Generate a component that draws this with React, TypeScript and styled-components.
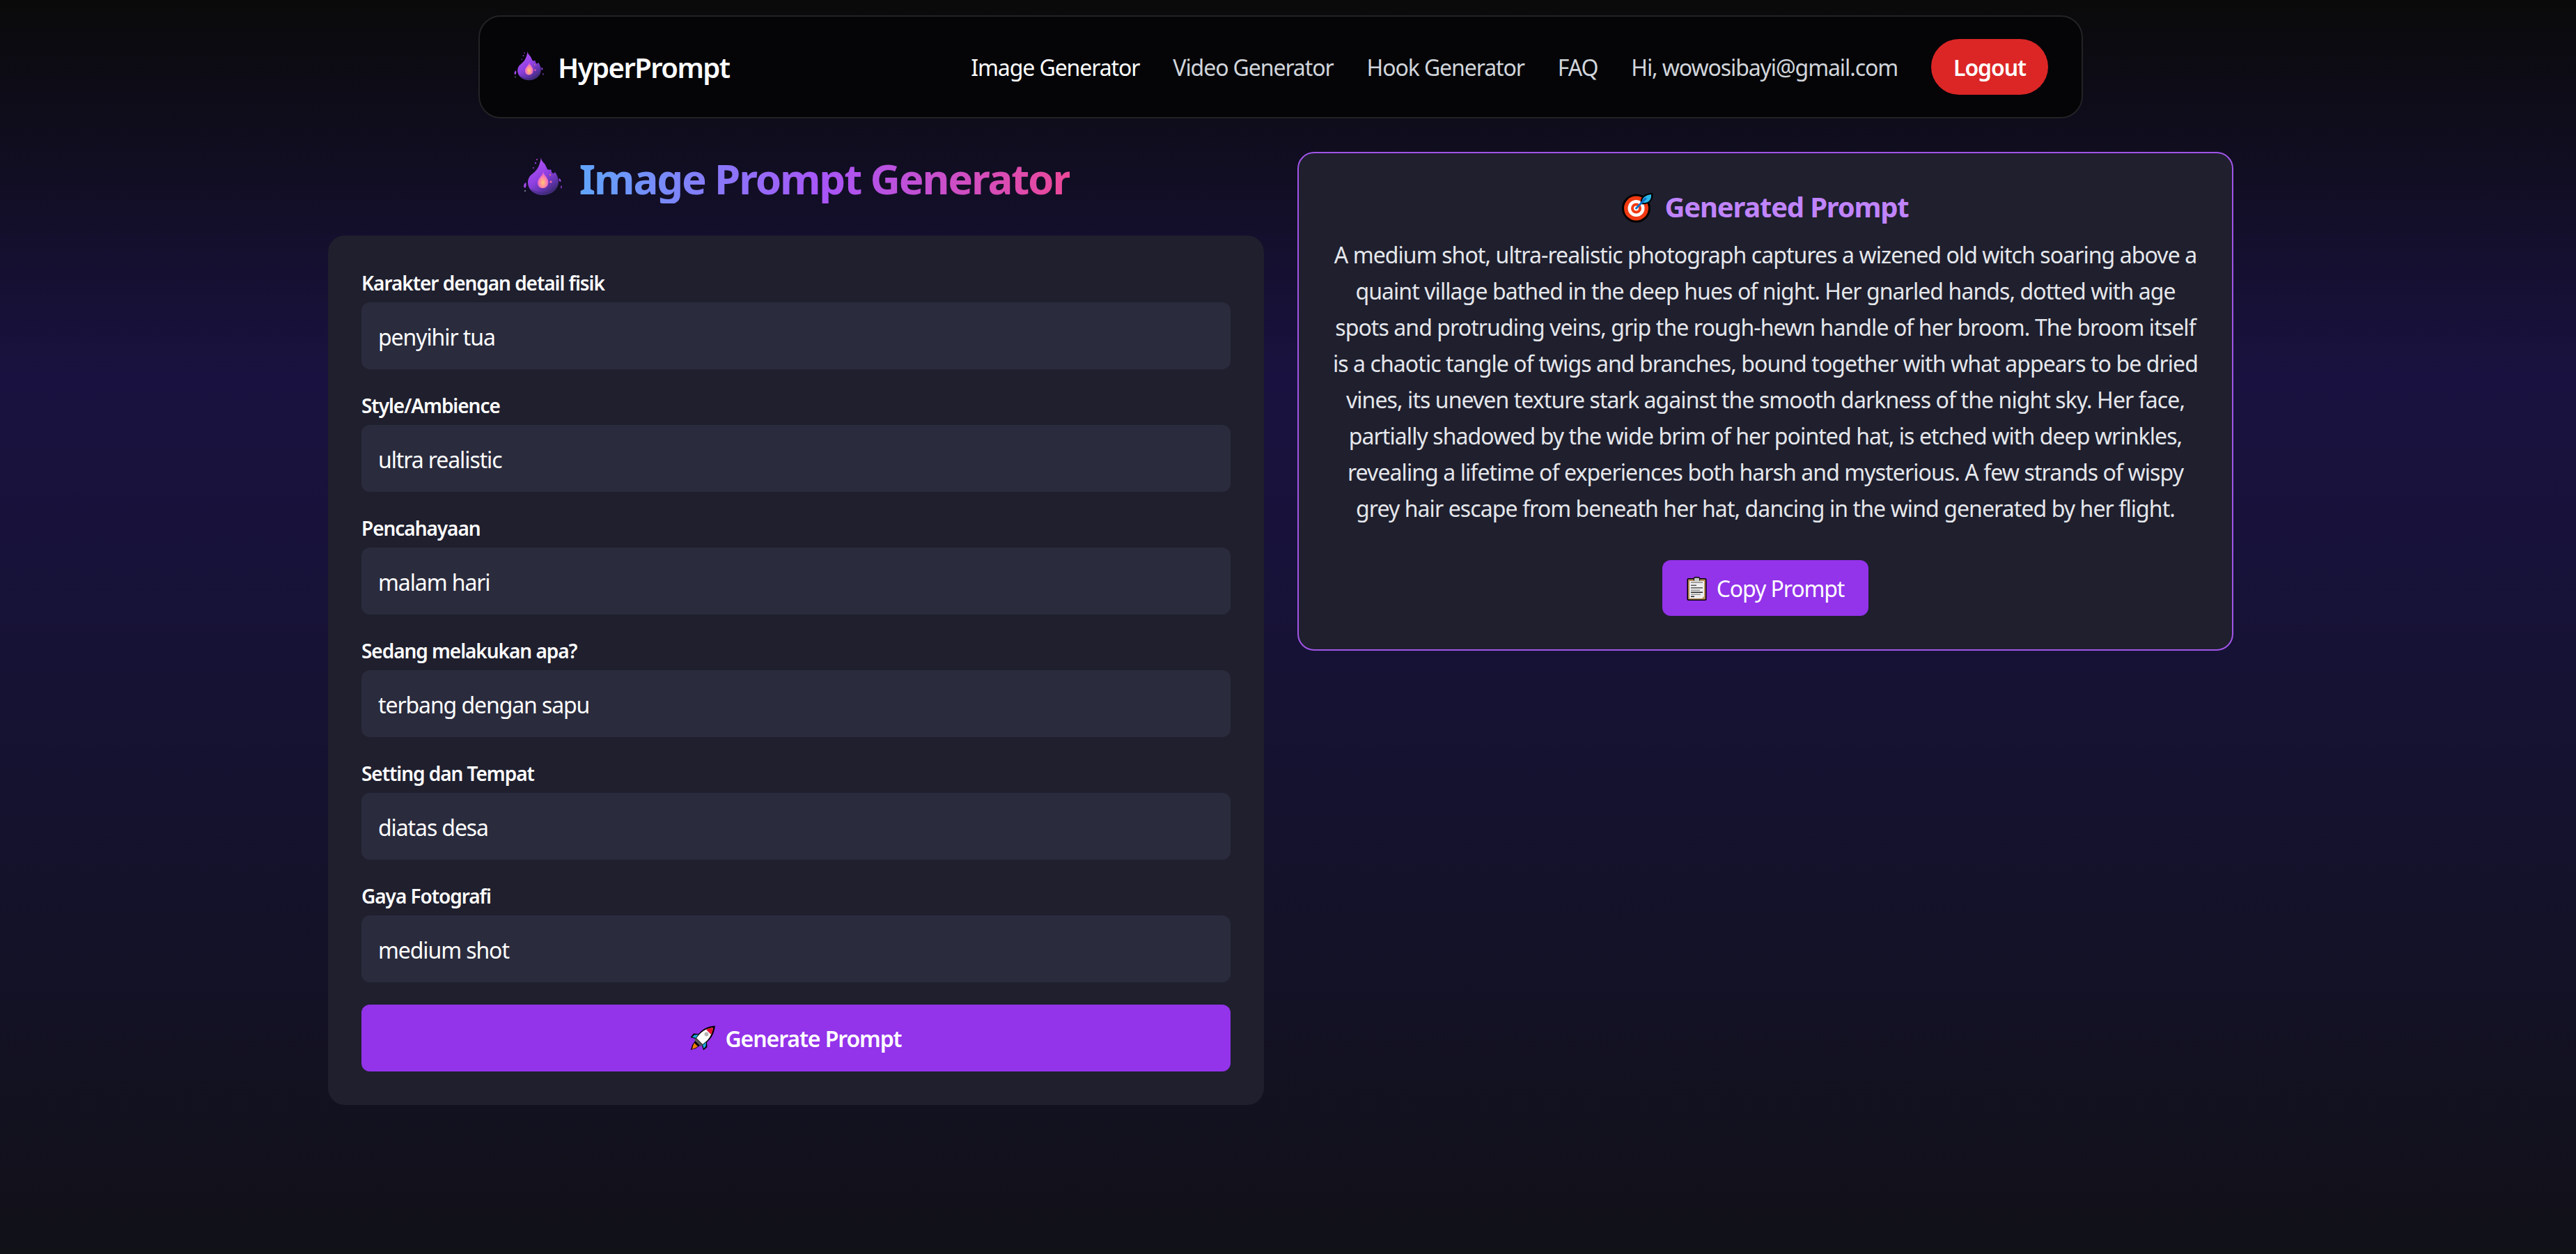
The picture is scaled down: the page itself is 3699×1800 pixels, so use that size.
import React from 'react';
import styled, { createGlobalStyle } from 'styled-components';

const GlobalStyle = createGlobalStyle`
  html, body {
    margin: 0;
    padding: 0;
  }
  body {
    font-family: "Noto Sans", "Open Sans", sans-serif;
    color: #fff;
    background: #111118;
  }
  * {
    box-sizing: border-box;
  }
`;

const Page = styled.div`
  min-height: 1800px;
  padding: 22px 21px 0 0;
  display: flex;
  flex-direction: column;
  align-items: center;
  background: linear-gradient(180deg, #0a0a0a 0%, #191240 30%, #151231 60%, #111118 100%);
`;

const Navbar = styled.nav`
  width: 2304px;
  height: 148px;
  padding: 0 48px;
  display: flex;
  align-items: center;
  justify-content: space-between;
  background: #050508;
  border: 2px solid #232326;
  border-radius: 32px;
`;

const Brand = styled.div`
  display: flex;
  align-items: center;
  gap: 18px;
  font-size: 40px;
  font-weight: 600;
  letter-spacing: -1.55px;
`;

const NavLinks = styled.div`
  display: flex;
  align-items: center;
  gap: 48px;
`;

const NavLink = styled.a<{ $active?: boolean }>`
  font-size: 32px;
  letter-spacing: -1.1px;
  color: ${props => (props.$active ? '#ffffff' : '#d1d5db')};
`;

const LogoutButton = styled.button`
  width: 168px;
  height: 80px;
  border: none;
  border-radius: 40px;
  background: #dc2626;
  color: #fff;
  font-family: inherit;
  font-size: 32px;
  font-weight: 600;
  letter-spacing: -1.1px;
`;

const Main = styled.main`
  margin-top: 48px;
  display: grid;
  grid-template-columns: 1344px 1344px;
  gap: 48px;
  align-items: start;
`;

const Title = styled.h1`
  margin: 0 0 48px;
  height: 72px;
  padding-top: 2px;
  display: flex;
  align-items: center;
  justify-content: center;
  gap: 22px;
  font-size: 60px;
  line-height: 72px;
  font-weight: 700;
  letter-spacing: -2.15px;
`;

const GradientText = styled.span`
  padding-top: 2px;
  background: linear-gradient(90deg, #60a5fa 0%, #a855f7 50%, #ec4899 100%);
  -webkit-background-clip: text;
  background-clip: text;
  color: transparent;
`;

const FormCard = styled.form`
  padding: 48px;
  display: flex;
  flex-direction: column;
  background: #1f1f2e;
  border-radius: 24px;
`;

const Field = styled.div`
  margin-bottom: 32px;
`;

const Label = styled.label`
  display: block;
  margin-bottom: 8px;
  font-size: 28px;
  line-height: 40px;
  font-weight: 600;
  letter-spacing: -1.05px;
`;

const TextInput = styled.input`
  display: block;
  width: 100%;
  height: 96px;
  padding: 2px 24px 0;
  border: none;
  outline: none;
  border-radius: 12px;
  background: #2a2b3d;
  color: #fff;
  font-family: inherit;
  font-size: 32px;
  letter-spacing: -1.1px;
`;

const PrimaryButton = styled.button<{ $wide?: boolean }>`
  width: ${props => (props.$wide ? '100%' : '296px')};
  height: ${props => (props.$wide ? '96px' : '80px')};
  border: none;
  border-radius: 12px;
  display: flex;
  align-items: center;
  justify-content: center;
  gap: 14px;
  background: #9333ea;
  color: #fff;
  font-family: inherit;
  font-size: 32px;
  font-weight: ${props => (props.$wide ? 600 : 400)};
  letter-spacing: -1.1px;
`;

const ResultCard = styled.section`
  padding: 48px;
  display: flex;
  flex-direction: column;
  align-items: center;
  background: #1f1f2e;
  border: 2px solid #a155e8;
  border-radius: 24px;
`;

const ResultTitle = styled.h2`
  margin: 0 0 16px;
  padding-top: 2px;
  height: 56px;
  display: flex;
  align-items: center;
  gap: 16px;
  font-size: 40px;
  line-height: 56px;
  font-weight: 700;
  letter-spacing: -1.2px;
  color: #c084fc;
`;

const ResultText = styled.p`
  margin: 0 0 48px;
  font-size: 32px;
  line-height: 52px;
  letter-spacing: -0.92px;
  text-align: center;
  color: #e5e7eb;
`;

const FlameIcon = ({ size, id }: { size: number; id: string }) => (
  <svg width={size} height={size} viewBox="0 0 60 60">
    <defs>
      <linearGradient id={`${id}-body`} x1="0.15" y1="0.05" x2="0.7" y2="1">
        <stop offset="0" stopColor="#b455f7" />
        <stop offset="0.5" stopColor="#9040e2" />
        <stop offset="0.8" stopColor="#5d33a8" />
        <stop offset="1" stopColor="#38296a" />
      </linearGradient>
      <radialGradient id={`${id}-core`} cx="0.5" cy="0.68" r="0.6">
        <stop offset="0" stopColor="#ffc86e" />
        <stop offset="0.5" stopColor="#ff86a8" />
        <stop offset="1" stopColor="#d44fe4" />
      </radialGradient>
    </defs>
    <path
      fill={`url(#${id}-body)`}
      d="M27 1c0 4 2 6 5 9 2 3 3 6 4 8 2 1 4 1 5 0 1 3 1 5 3 6 1 0 2-1 3-2 3 4 5 9 5 14 0 10-9 19-22 19C17 55 8 47 8 37c0-5 2-9 6-12 2-2 5-4 7-7 3-4 5-11 6-17z"
    />
    <path fill="#3f2a78" opacity="0.5" d="M12 46c5 3 11 5 18 5 8 0 14-3 19-8-3 7-10 12-20 12-7 0-13-3-17-9z" />
    <path
      fill={`url(#${id}-core)`}
      d="M30 20c0 4 2 6 5 10 2 3 3 6 2 9-1 4-4 6-8 6-5 0-7-4-7-8 0-3 2-5 4-8 2-2 4-5 4-9z"
    />
    <path fill="#a24bec" d="M2 43c0-3 1-5 3-6 1 2 1 5-1 8l-2-2zM53 31c2 1 3 3 2 5-2 0-3-3-2-5zM56 41c1 2 1 3 0 5-1-2-1-3 0-5z" />
    <circle cx="21" cy="4" r="1" fill="#c13bd6" />
    <circle cx="19" cy="9" r="1.200" fill="#8c3cd8" />
    <circle cx="16" cy="16" r="1" fill="#8c3cd8" />
    <circle cx="40" cy="26" r="1" fill="#f08a5a" />
    <circle cx="4" cy="49" r="1" fill="#9aa0b5" />
    <circle cx="41" cy="36" r="1.500" fill="#ff6fa0" />
  </svg>
);

const TargetIcon = () => (
  <svg width="45" height="45" viewBox="0 0 45 45">
    <circle cx="20.500" cy="24" r="20.500" fill="#000" />
    <circle cx="20.500" cy="24" r="17.500" fill="#f13a13" />
    <circle cx="20.500" cy="24" r="12" fill="#fff" />
    <circle cx="20.500" cy="24" r="7.500" fill="#f13a13" />
    <circle cx="20.500" cy="24" r="3.500" fill="#fff" />
    <path d="M27 18C25 8 33 2 44 2c2 10-5 18-17 16z" fill="#000" />
    <path d="M29 16c-1-7 5-11 13-12 1 8-4 13-13 12z" fill="#2ab8ea" />
    <path d="M20.500 24L34 10" stroke="#0f6fc6" strokeWidth="3" strokeLinecap="round" />
  </svg>
);

const RocketIcon = () => (
  <svg width="36" height="36" viewBox="0 0 36 36">
    <path d="M35.500.5C27 1 20 4 15 9l-3 3-7-.5L.5 17l7 2 .5 2-5 7-2 7 7-2 7-5 2 .5 2 7 5.500-4.500-.5-7 3-3c5-5 8-12 9-21z" fill="#000" />
    <path d="M12 13l-6 .5-3 3 5 1.500zM23 24l-.5 6-3 3-1.500-5z" fill="#19a9dd" />
    <path d="M33 3c-1 7-4 14-9 19l-6 5-9-9 5-6C19 7 26 4 33 3z" fill="#fff" />
    <path d="M33 3c-4 .4-7 1.300-10 3l7 7c1.700-3 2.600-6 3-10z" fill="#e2132c" />
    <circle cx="23.500" cy="12.500" r="3" fill="#b4b4b4" />
    <path d="M8 18l10 10-3 2-9-9z" fill="#5b5b5b" />
    <path d="M6 25l5 5-3 2-5 2 1-5z" fill="#f57c00" />
  </svg>
);

const ClipboardIcon = () => (
  <svg width="29" height="35" viewBox="0 0 29 35">
    <rect x="0.500" y="3" width="28" height="32" rx="2" fill="#000" />
    <rect x="2" y="4.500" width="25" height="29" rx="1" fill="#b98d5b" />
    <path d="M4 7h21v22l-3 3H4z" fill="#eeeeee" />
    <rect x="10" y="1" width="9" height="6" rx="2" fill="#000" />
    <rect x="11" y="2.500" width="7" height="5" rx="1" fill="#c9c9c9" />
    <g fill="#555">
      <rect x="6" y="8.500" width="17" height="1" />
      <rect x="6" y="12.500" width="8" height="1.500" />
      <rect x="6" y="16" width="17" height="1.500" />
      <rect x="6" y="19.500" width="13" height="1.500" fill="#999" />
      <rect x="6" y="22.500" width="17" height="1.500" fill="#222" />
      <rect x="6" y="25.500" width="14" height="1.500" fill="#999" />
      <rect x="6" y="28.500" width="5" height="1.500" fill="#222" />
    </g>
  </svg>
);

const fields = [
  { label: 'Karakter dengan detail fisik', value: 'penyihir tua' },
  { label: 'Style/Ambience', value: 'ultra realistic' },
  { label: 'Pencahayaan', value: 'malam hari' },
  { label: 'Sedang melakukan apa?', value: 'terbang dengan sapu' },
  { label: 'Setting dan Tempat', value: 'diatas desa' },
  { label: 'Gaya Fotografi', value: 'medium shot' },
];

const generatedPrompt =
  'A medium shot, ultra-realistic photograph captures a wizened old witch soaring above a quaint village bathed in the deep hues of night. Her gnarled hands, dotted with age spots and protruding veins, grip the rough-hewn handle of her broom. The broom itself is a chaotic tangle of twigs and branches, bound together with what appears to be dried vines, its uneven texture stark against the smooth darkness of the night sky. Her face, partially shadowed by the wide brim of her pointed hat, is etched with deep wrinkles, revealing a lifetime of experiences both harsh and mysterious. A few strands of wispy grey hair escape from beneath her hat, dancing in the wind generated by her flight.';

const App: React.FC = () => {
  return (
    <>
      <GlobalStyle />
      <Page>
        <Navbar>
          <Brand>
            <FlameIcon size={46} id="brand" />
            HyperPrompt
          </Brand>
          <NavLinks>
            <NavLink $active>Image Generator</NavLink>
            <NavLink>Video Generator</NavLink>
            <NavLink>Hook Generator</NavLink>
            <NavLink>FAQ</NavLink>
            <NavLink>Hi, wowosibayi@gmail.com</NavLink>
            <LogoutButton>Logout</LogoutButton>
          </NavLinks>
        </Navbar>
        <Main>
          <div>
            <Title>
              <FlameIcon size={60} id="title" />
              <GradientText>Image Prompt Generator</GradientText>
            </Title>
            <FormCard>
              {fields.map(field => (
                <Field key={field.label}>
                  <Label>{field.label}</Label>
                  <TextInput defaultValue={field.value} />
                </Field>
              ))}
              <PrimaryButton type="button" $wide>
                <RocketIcon />
                Generate Prompt
              </PrimaryButton>
            </FormCard>
          </div>
          <ResultCard>
            <ResultTitle>
              <TargetIcon />
              Generated Prompt
            </ResultTitle>
            <ResultText>{generatedPrompt}</ResultText>
            <PrimaryButton type="button">
              <ClipboardIcon />
              Copy Prompt
            </PrimaryButton>
          </ResultCard>
        </Main>
      </Page>
    </>
  );
};

export default App;
